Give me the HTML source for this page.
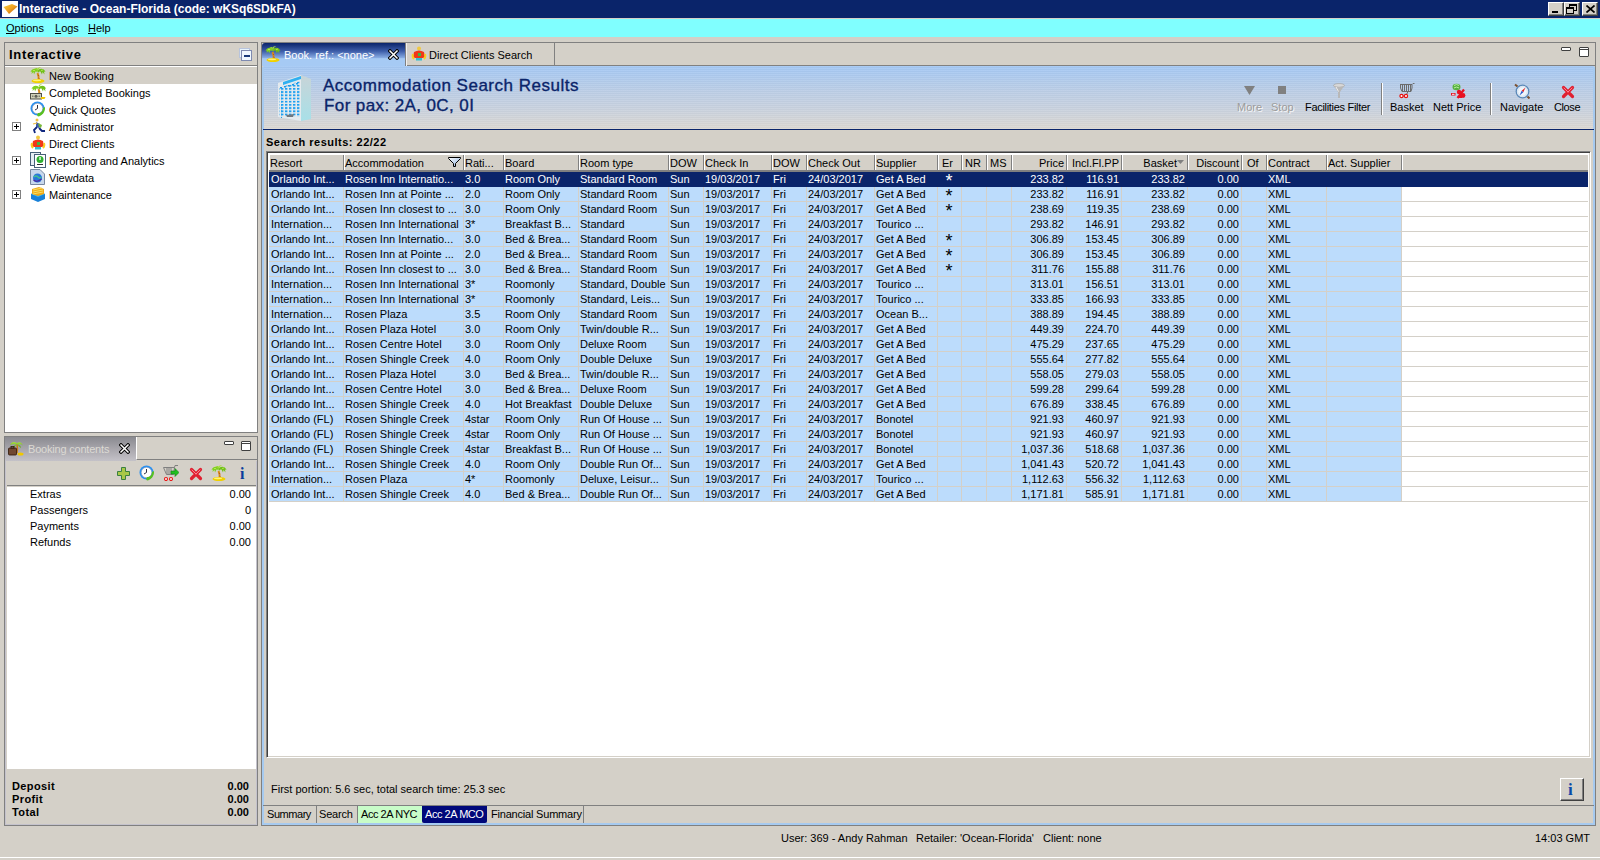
<!DOCTYPE html>
<html><head><meta charset="utf-8">
<style>
*{margin:0;padding:0;box-sizing:border-box}
html,body{width:1600px;height:860px;overflow:hidden;background:#d4d0c8;font-family:"Liberation Sans",sans-serif;font-size:11px;color:#000}
.a{position:absolute}
.t{position:absolute;white-space:nowrap;line-height:13px}
svg.ic{position:absolute;width:16px;height:16px}
#title{left:0;top:0;width:1600px;height:18px;background:#0a246a}
#title .tx{left:19px;top:2px;color:#fff;font-weight:bold;font-size:12px;line-height:14px}
.wb{position:absolute;top:2px;width:16px;height:14px;background:#d4d0c8;border-top:1px solid #fff;border-left:1px solid #fff;border-right:1px solid #404040;border-bottom:1px solid #404040;box-shadow:inset -1px -1px 0 #808080}
#menu{left:0;top:18px;width:1600px;height:19px;background:#80ffff;border-top:1px solid #d4d0c8}
#menu .t{top:3px}
#lp{left:4px;top:42px;width:254px;height:391px;border:1px solid #808080;background:#fff}
#lph{left:0;top:0;width:252px;height:23px;background:#d4d0c8;border-bottom:1px solid #808080}
.ti{position:absolute;left:0;width:252px;height:17px}
.ti .t{left:44px;top:3px}
.ti svg.ic{left:25px;top:0}
.exp{position:absolute;left:7px;top:4px;width:9px;height:9px;border:1px solid #808080;background:#fff}
.exp:before{content:"";position:absolute;left:1px;top:3px;width:5px;height:1px;background:#000}
.exp:after{content:"";position:absolute;left:3px;top:1px;width:1px;height:5px;background:#000}
#bp{left:4px;top:436px;width:254px;height:390px;border:1px solid #808080;background:#d4d0c8}
#rp{left:261px;top:42px;width:1335px;height:784px;border:1px solid #808080;background:#d4d0c8}
#rpin{left:0;top:23px;width:1333px;height:758px;border:1px solid #a6caf0;border-top:none}
#hdrbar{left:1px;top:23px;width:1331px;height:63px;background:repeating-linear-gradient(rgba(255,255,255,0.07) 0 1px,rgba(0,0,0,0.02) 1px 2px),linear-gradient(#a4c8f4,#bccee6 40%,#cad2de 70%,#dcd8d2)}
#tbl{left:266px;top:151px;width:1325px;height:607px;background:#fff;border-top:1px solid #808080;border-left:1px solid #808080;border-right:1px solid #fff;border-bottom:1px solid #fff;box-shadow:inset 1px 1px 0 #404040,inset -1px -1px 0 #d4d0c8}
.hc{position:absolute;top:0;height:17px;background:#d4d0c8;border-right:1px solid #808080;border-bottom:2px solid #808080;box-shadow:inset 1px 0 0 #fff}
.hc span{position:absolute;left:1px;top:2px;line-height:13px;white-space:nowrap}
.hc.r span{left:auto;right:2px}
.hc.bk span{right:10px}
.hc.p4 span{left:4px}
.hc.p3 span{left:3px}
.hc.p5 span{left:5px}
.row{position:absolute;left:0;width:1319px;height:15px;background:linear-gradient(#fff,#fff) 1132px 0/188px 15px no-repeat,#bcdcfc;border-bottom:1px solid #d4d0c8}
.row.sel{background:#0a246a;color:#fff;border-bottom-color:#0a246a}
.bc{position:absolute;top:0;height:14px;padding-left:1px;line-height:14px;white-space:nowrap;border-right:1px solid #d4d0c8}
.sel .bc{border-right-color:#0a246a}
.bc.r{text-align:right;padding-right:2px;padding-left:0}
.bc.f{padding-left:2px}
.bc.c{text-align:center;padding-left:0}
.ast{font-size:18px;position:relative;top:4px;margin-left:-1px;line-height:10px}
.bt{position:absolute;height:17px;top:0;line-height:16px;padding:0 0 0 3px;border-right:1px solid #808080;white-space:nowrap}
.tb{position:absolute;top:58px;line-height:13px;white-space:nowrap}
.sep{position:absolute;top:40px;width:2px;height:32px;border-left:1px solid #808080;border-right:1px solid #fff}
</style></head><body>
<svg width="0" height="0" style="position:absolute">
<defs>
<linearGradient id="gpalm" x1="0" y1="0" x2="0" y2="1"><stop offset="0" stop-color="#a8e040"/><stop offset="1" stop-color="#5aa818"/></linearGradient>
<symbol id="i-palm" viewBox="0 0 16 16">
 <path d="M7.5 6 C8.5 8 9 10.5 8.5 13.5" stroke="#d88818" stroke-width="2" fill="none"/>
 <path d="M8 8 L9 9 M8.5 11 L9.5 11.5" stroke="#a85010" stroke-width="0.8"/>
 <path d="M8 3 C5 1 2 1.5 0.5 5 L2 4.5 L1.5 7 L3.5 5 L4 7.5 L5.5 4.5 C6.5 4.5 7 5 7.5 5.5 Z" fill="#80d020"/>
 <path d="M8 3 C11 1 14 1.5 15.5 5 L14 4.5 L14.5 7.5 L12.5 5 L12 7.5 L10.5 4.5 C9.5 4.5 8.5 5 8 5.5 Z" fill="#70c018"/>
 <path d="M8 3 C7 1 9 0 11 0.5 C9 1 8.5 2 8.5 3.5Z" fill="#a8e040"/>
 <path d="M6 1 C7.5 0.5 8.5 2 8 3.5 C7 2.5 6 2 4.5 2Z" fill="#98d830"/>
 <path d="M3 3.5 L5 3.5 M11 3.5 L13 3" stroke="#c0f060" stroke-width="0.8"/>
 <ellipse cx="8" cy="14" rx="6.5" ry="2" fill="#f0d000"/>
 <ellipse cx="7" cy="13.3" rx="4" ry="0.9" fill="#fff27a"/>
</symbol>
<symbol id="i-money" viewBox="0 0 16 16">
 <path d="M8.5 5 C9.5 7 9.5 9 9 11" stroke="#d88818" stroke-width="2" fill="none"/>
 <path d="M9 3 C6 1 3 1.5 1.5 5 L3 4.5 L2.5 7 L4.5 5 L5 7.5 L6.5 4.5 C7.5 4.5 8 5 8.5 5.5 Z" fill="#80d020"/>
 <path d="M9 3 C12 1 15 1.5 16 5 L15 4.5 L15.5 7.5 L13.5 5 L13 7.5 L11.5 4.5 C10.5 4.5 9.5 5 9 5.5 Z" fill="#70c018"/>
 <path d="M9 3 C8 1 10 0 12 0.5 C10 1 9.5 2 9.5 3.5Z" fill="#a8e040"/>
 <rect x="0.5" y="9.5" width="11" height="5.5" fill="#d0d0b8" stroke="#505048" stroke-width="1"/>
 <circle cx="6" cy="12.2" r="1.5" fill="#606058"/>
 <rect x="2" y="11.5" width="1.5" height="1.5" fill="#808070"/><rect x="8.5" y="11.5" width="1.5" height="1.5" fill="#808070"/>
 <path d="M11 13 H15.5 L14.5 15 H11Z" fill="#f0c800"/>
</symbol>
<symbol id="i-clock" viewBox="0 0 16 16">
 <circle cx="7.5" cy="7.5" r="7" fill="#2a90f0"/>
 <circle cx="7.5" cy="7.5" r="5.2" fill="#fff" stroke="#9090a0" stroke-width="0.5"/>
 <path d="M7.5 4 V7.5 L5 9" stroke="#303040" stroke-width="1" fill="none"/>
 <path d="M15 6 C15.5 11 12 15 8 15.5 L7 14 L8 12 C11 12 13 10 13 7Z" fill="#58c020"/>
</symbol>
<symbol id="i-runner" viewBox="0 0 16 16">
 <circle cx="7" cy="2" r="1.5" fill="#f0c040"/>
 <path d="M6 4 L10 6 L9 10 L6 9Z" fill="#3a5aa8"/>
 <path d="M8 5 L12 7 L11 10 L9 9Z" fill="#78b838"/>
 <path d="M3 6 L7 5" stroke="#f0c040" stroke-width="1.2"/>
 <path d="M7 9 L4 12 L5 15 M9 10 L12 13 L15 13" stroke="#102880" stroke-width="1.8" fill="none"/>
</symbol>
<symbol id="i-client" viewBox="0 0 16 16">
 <circle cx="8" cy="2.5" r="2" fill="#f0c840"/>
 <path d="M3 6 Q8 3 13 6 L14 11 L12 12 L4 12 L2 11Z" fill="#f03818"/>
 <rect x="7" y="7" width="3" height="3" fill="#40b840"/>
 <path d="M2 8 Q1 11 3 13 M14 8 Q15 11 13 13" stroke="#f8d020" stroke-width="2" fill="none"/>
 <rect x="5" y="12" width="6" height="2.5" fill="#30c0d0"/>
</symbol>
<symbol id="i-report" viewBox="0 0 16 16">
 <rect x="0.5" y="0.5" width="10" height="13" fill="#e8eef4" stroke="#486078"/>
 <rect x="4.5" y="2.5" width="11" height="13" fill="#fff" stroke="#486078"/>
 <circle cx="10" cy="7.5" r="3.5" fill="#30b030"/>
 <rect x="9.4" y="5" width="1.3" height="3" fill="#fff"/>
 <rect x="7" y="12" width="6" height="1" fill="#303030"/>
</symbol>
<symbol id="i-view" viewBox="0 0 16 16">
 <path d="M0.5 0.5 H10 L14.5 5 V15.5 H0.5Z" fill="#c8d8ec" stroke="#7888a0"/>
 <circle cx="7.5" cy="9" r="4.5" fill="#2878d8"/>
 <path d="M4 8 Q6 6 8 8 Q10 10 11 8" stroke="#40c090" stroke-width="1.5" fill="none"/>
 <path d="M3.5 11 Q7 14 11.5 10" stroke="#5028a0" stroke-width="1.2" fill="none"/>
</symbol>
<symbol id="i-maint" viewBox="0 0 16 16">
 <path d="M1 8 L8 5 L15 8 L15 13 L8 16 L1 13Z" fill="#1880d8"/>
 <path d="M1 8 L8 11 L15 8 L8 5Z" fill="#38b8f0"/>
 <path d="M2 3 L9 1 L14 3 L14 8 L8 10 L2 8Z" fill="#f0a818"/>
 <path d="M3 4 L12 2 M3 6 L13 4 M3 8 L13 6" stroke="#f8e060" stroke-width="1"/>
</symbol>
<symbol id="i-xw" viewBox="0 0 11 11">
 <path d="M2 2 L9 9 M9 2 L2 9" stroke="#000" stroke-width="3.4" stroke-linecap="square"/>
 <path d="M2 2 L9 9 M9 2 L2 9" stroke="#fff" stroke-width="1.5" stroke-linecap="square"/>
</symbol>
<symbol id="i-redx" viewBox="0 0 14 14">
 <path d="M2.5 2.5 L11.5 11.5 M11.5 2.5 L2.5 11.5" stroke="#e02030" stroke-width="3.2" stroke-linecap="round"/>
 <path d="M3 3 L7 7 M11 3 L7 7" stroke="#ff8090" stroke-width="1" stroke-linecap="round"/>
</symbol>
<symbol id="i-cart" viewBox="0 0 16 16">
 <path d="M1 1.5 H13" stroke="#6c6c6c" stroke-width="1"/>
 <path d="M13 1.5 L14 0.5 H15.5" stroke="#6c6c6c" stroke-width="1" fill="none"/>
 <path d="M1.5 1.5 V5 L3 8.5 H12 L13 5 V1.5" stroke="#6c6c6c" stroke-width="1" fill="none"/>
 <path d="M3.5 2 V8 M5.5 2 V8 M7.5 2 V8 M9.5 2 V8 M11.5 2 V8" stroke="#6c6c6c" stroke-width="1"/>
 <path d="M9 8.5 L7.5 11.5" stroke="#6c6c6c" stroke-width="1"/>
 <circle cx="2.5" cy="13" r="1.6" fill="#fff" stroke="#e81010" stroke-width="1.2"/>
 <circle cx="7" cy="13" r="1.6" fill="#fff" stroke="#e81010" stroke-width="1.2"/>
 <path d="M4 13 H5.5" stroke="#e81010" stroke-width="1"/>
</symbol>
<symbol id="i-nett" viewBox="0 0 16 16">
 <ellipse cx="6.5" cy="4" rx="4" ry="3.2" fill="#58b040"/>
 <path d="M4 2.5 Q6.5 0.5 9 2.5 M4 5 Q6.5 3 9 5" stroke="#b8f0a0" stroke-width="1" fill="none"/>
 <circle cx="9" cy="9" r="2.2" fill="#e81020"/>
 <circle cx="13" cy="12.5" r="2.4" fill="#e81020"/>
 <path d="M14 6.5 L7.5 15" stroke="#e81020" stroke-width="2.2"/>
 <rect x="1" y="10" width="4.5" height="2.5" fill="#e81020"/>
 <rect x="2" y="10.8" width="2.5" height="1" fill="#f8f8f8"/>
 <rect x="9" y="12" width="3" height="3" fill="#e81020"/>
</symbol>
<symbol id="i-compass" viewBox="0 0 16 16">
 <circle cx="8.5" cy="8.5" r="6.3" fill="#f0f6fc" stroke="#5a88b8" stroke-width="1.3"/>
 <circle cx="8.5" cy="8.5" r="4.8" fill="none" stroke="#c8d8e8" stroke-width="0.8"/>
 <path d="M1 1.5 L3.5 3.5" stroke="#7a5030" stroke-width="2"/>
 <path d="M13.5 13.5 L15.5 15.5" stroke="#7a5030" stroke-width="2"/>
 <path d="M11.5 4.5 L9.3 9.3 L7.7 7.7Z" fill="#e02020"/>
 <path d="M5.5 12.5 L7.7 7.7 L9.3 9.3Z" fill="#2858c8"/>
</symbol>
<symbol id="i-funnel" viewBox="0 0 12 16">
 <ellipse cx="6" cy="2.5" rx="5.5" ry="2" fill="#d8d8d8" stroke="#a0a0a0" stroke-width="0.6"/>
 <path d="M0.5 2.5 L5 9 V15 H7 V9 L11.5 2.5 Q6 5 0.5 2.5Z" fill="#b8b8b8"/>
 <path d="M3 4 L5.5 8.5" stroke="#f0f0f0" stroke-width="1"/>
</symbol>
<symbol id="i-plus" viewBox="0 0 13 13">
 <path d="M4.5 0.5 H8.5 V4.5 H12.5 V8.5 H8.5 V12.5 H4.5 V8.5 H0.5 V4.5 H4.5Z" fill="#a8c848" stroke="#3a8040" stroke-width="1"/>
</symbol>
<symbol id="i-cartgo" viewBox="0 0 16 16">
 <path d="M0.5 2.5 H11.5 L10.5 9.5 H3.5Z" fill="none" stroke="#808080" stroke-width="1"/>
 <path d="M4 3 V9 M6 3 V9 M8 3 V9" stroke="#808080" stroke-width="1"/>
 <path d="M11.5 2.5 L12 0.5 H15" stroke="#808080" stroke-width="1" fill="none"/>
 <circle cx="3" cy="14" r="1.5" fill="#fff" stroke="#e81010" stroke-width="1.1"/>
 <circle cx="8" cy="14" r="1.5" fill="#fff" stroke="#e81010" stroke-width="1.1"/>
 <path d="M8 6 H12 V3.5 L16 7.5 L12 11.5 V9 H8Z" fill="#20c020" stroke="#108010" stroke-width="0.6"/>
</symbol>
<symbol id="i-booking" viewBox="0 0 16 16">
 <path d="M9 4 C9.5 7 9.5 10 9 13" stroke="#c87818" stroke-width="1.5" fill="none"/>
 <path d="M9 3 C6 1 3 2 2 5 C4 4 6 4 8 4 C6 5 5 7 5 8 C7 7 8 5 9 4 C10 6 12 7 13 8 C13 6 12 5 10 4 C12 4 14 4 15 6 C14 3 12 1 9 3Z" fill="url(#gpalm)"/>
 <rect x="0.5" y="8" width="8" height="7" rx="1" fill="#704830" stroke="#301808" stroke-width="0.8"/>
 <rect x="3" y="6.5" width="3" height="1.5" fill="none" stroke="#301808" stroke-width="0.8"/>
 <ellipse cx="12.5" cy="14" rx="3" ry="1.5" fill="#f0c800"/>
</symbol>
</defs></svg>

<div id="title" class="a">
  <div class="a" style="left:2px;top:1px;width:16px;height:16px;background:#fff"></div>
  <svg class="a" style="left:3px;top:3px" width="15" height="12" viewBox="0 0 15 12"><defs><linearGradient id="gti" x1="0" y1="0" x2="1" y2="1"><stop offset="0" stop-color="#f8d040"/><stop offset="0.5" stop-color="#f0a020"/><stop offset="1" stop-color="#b05008"/></linearGradient></defs><path d="M0.5 4 L9 1 L14.5 3.5 L6 11 Z" fill="url(#gti)"/></svg>
  <div class="t tx">Interactive - Ocean-Florida (code: wKSq6SDkFA)</div>
  <div class="wb" style="left:1548px"><div class="a" style="left:3px;top:8px;width:6px;height:2px;background:#000"></div></div>
  <div class="wb" style="left:1564px"><div class="a" style="left:4px;top:1px;width:8px;height:7px;border:1px solid #000;border-top-width:2px"></div><div class="a" style="left:1px;top:4px;width:8px;height:7px;border:1px solid #000;border-top-width:2px;background:#d4d0c8"></div></div>
  <div class="wb" style="left:1582px"><svg class="a" style="left:3px;top:2px" width="9" height="8"><path d="M0.5 0.5 L8.5 7.5 M8.5 0.5 L0.5 7.5" stroke="#000" stroke-width="1.7"/></svg></div>
</div>
<div id="menu" class="a">
  <div class="t" style="left:6px"><u>O</u>ptions</div>
  <div class="t" style="left:55px"><u>L</u>ogs</div>
  <div class="t" style="left:88px"><u>H</u>elp</div>
</div>

<div id="lp" class="a">
  <div id="lph" class="a"><div class="t" style="left:4px;top:4px;font-weight:bold;font-size:13px;line-height:15px;letter-spacing:0.7px">Interactive</div>
    <div class="a" style="left:234px;top:5px;width:11px;height:10px;border:1px solid #b8c4dc;background:#e8f4fc"></div>
    <div class="a" style="left:236px;top:7px;width:11px;height:11px;border:1px solid #7f8ab0;background:#f0f8ff"><div class="a" style="left:2px;top:4px;width:6px;height:2px;background:#1a3a7a"></div></div>
  </div>
  <div class="ti" style="top:24px;background:#d4d0c8"><svg class="ic"><use href="#i-palm"/></svg><div class="t">New Booking</div></div>
  <div class="ti" style="top:41px"><svg class="ic"><use href="#i-money"/></svg><div class="t">Completed Bookings</div></div>
  <div class="ti" style="top:58px"><svg class="ic"><use href="#i-clock"/></svg><div class="t">Quick Quotes</div></div>
  <div class="ti" style="top:75px"><div class="exp"></div><svg class="ic"><use href="#i-runner"/></svg><div class="t">Administrator</div></div>
  <div class="ti" style="top:92px"><svg class="ic"><use href="#i-client"/></svg><div class="t">Direct Clients</div></div>
  <div class="ti" style="top:109px"><div class="exp"></div><svg class="ic"><use href="#i-report"/></svg><div class="t">Reporting and Analytics</div></div>
  <div class="ti" style="top:126px"><svg class="ic"><use href="#i-view"/></svg><div class="t">Viewdata</div></div>
  <div class="ti" style="top:143px"><div class="exp"></div><svg class="ic"><use href="#i-maint"/></svg><div class="t">Maintenance</div></div>
</div>

<div id="bp" class="a">
  <div class="a" style="left:0;top:0;width:131px;height:24px;background:linear-gradient(#8a8a90,#a8a6ac 50%,#c4c2c8)"></div>
  <div class="a" style="left:131px;top:0;width:121px;height:23px;background:#d4d0c8;border-left:1px solid #fff;border-bottom:1px solid #808080"></div>
  <svg class="ic" style="left:3px;top:3px"><use href="#i-booking"/></svg>
  <div class="t" style="left:23px;top:6px;color:#dcdad4;letter-spacing:-0.2px">Booking contents</div>
  <svg class="a" style="left:114px;top:6px" width="11" height="11"><use href="#i-xw"/></svg>
  <div class="a" style="left:219px;top:4px;width:10px;height:4px;border:1px solid #404040;border-radius:1px;background:#fff"></div>
  <div class="a" style="left:236px;top:4px;width:10px;height:10px;border:1px solid #404040;border-radius:1px;background:#fff"><div class="a" style="left:0;top:1px;width:8px;height:1px;background:#404040"></div></div>
  <div class="a" style="left:0;top:24px;width:252px;height:364px;border:1px solid #c4c2cc;border-top:none"></div>
  <div class="a" style="left:2px;top:24px;width:249px;height:25px;background:#d4d0c8;border-bottom:1px solid #808080"></div>
  <svg class="a" style="left:112px;top:30px" width="13" height="13"><use href="#i-plus"/></svg>
  <svg class="ic" style="left:134px;top:28px"><use href="#i-clock"/></svg>
  <svg class="ic" style="left:158px;top:28px"><use href="#i-cartgo"/></svg>
  <svg class="a" style="left:184px;top:30px" width="14" height="14"><use href="#i-redx"/></svg>
  <svg class="ic" style="left:206px;top:28px"><use href="#i-palm"/></svg>
  <div class="t" style="left:235px;top:29px;color:#0a3c9c;font-weight:bold;font-family:'Liberation Serif',serif;font-size:16px;line-height:16px">i</div>
  <div class="a" style="left:2px;top:50px;width:249px;height:282px;background:#fff"></div>
  <div class="t" style="left:25px;top:51px">Extras</div><div class="t" style="left:200px;width:46px;text-align:right;top:51px">0.00</div>
  <div class="t" style="left:25px;top:67px">Passengers</div><div class="t" style="left:200px;width:46px;text-align:right;top:67px">0</div>
  <div class="t" style="left:25px;top:83px">Payments</div><div class="t" style="left:200px;width:46px;text-align:right;top:83px">0.00</div>
  <div class="t" style="left:25px;top:99px">Refunds</div><div class="t" style="left:200px;width:46px;text-align:right;top:99px">0.00</div>
  <div class="t" style="left:7px;top:343px;font-weight:bold;letter-spacing:0.4px">Deposit</div><div class="t" style="left:178px;width:66px;text-align:right;top:343px;font-weight:bold">0.00</div>
  <div class="t" style="left:7px;top:356px;font-weight:bold;letter-spacing:0.4px">Profit</div><div class="t" style="left:178px;width:66px;text-align:right;top:356px;font-weight:bold">0.00</div>
  <div class="t" style="left:7px;top:369px;font-weight:bold;letter-spacing:0.4px">Total</div><div class="t" style="left:178px;width:66px;text-align:right;top:369px;font-weight:bold">0.00</div>
</div>

<div id="rp" class="a">
  <div class="a" style="left:0;top:0;width:1333px;height:23px;background:#d4d0c8;border-bottom:1px solid #808080"></div>
  <div class="a" style="left:0;top:0;width:143px;height:23px;border-radius:3px 0 0 0;background:linear-gradient(#0a246a,#3c5ca8 35%,#8aaee4 65%,#a6caf4 68%,#a6caf4)"></div>
  <svg class="ic" style="left:3px;top:3px"><use href="#i-palm"/></svg>
  <div class="t" style="left:22px;top:6px;color:#fff">Book. ref.: &lt;none&gt;</div>
  <svg class="a" style="left:126px;top:6px" width="11" height="11"><use href="#i-xw"/></svg>
  <div class="a" style="left:143px;top:0px;width:150px;height:23px;border-right:1px solid #808080;border-left:1px solid #808080;box-shadow:inset 1px 0 0 #f0f0f0"></div>
  <svg class="ic" style="left:149px;top:3px"><use href="#i-client"/></svg>
  <div class="t" style="left:167px;top:6px">Direct Clients Search</div>
  <div class="a" style="left:1299px;top:4px;width:10px;height:4px;border:1px solid #404040;border-radius:1px;background:#fff"></div>
  <div class="a" style="left:1317px;top:4px;width:10px;height:10px;border:1px solid #404040;border-radius:1px;background:#fff"><div class="a" style="left:0;top:1px;width:8px;height:1px;background:#404040"></div></div>
  <div id="hdrbar" class="a"></div>
  <div class="a" style="left:0;top:24px;width:2px;height:758px;background:#a6caf0"></div>
  <div class="a" style="left:1331px;top:24px;width:2px;height:758px;background:#a6caf0"></div>
  <div class="a" style="left:0;top:780px;width:1333px;height:2px;background:#a6caf0"></div>
  <div class="a" style="left:1px;top:86px;width:1331px;height:1px;background:#0a246a"></div>
  <svg class="a" style="left:15px;top:29px" width="36" height="50" viewBox="0 0 36 50">
    <defs><linearGradient id="gside" x1="0" y1="0" x2="0" y2="1"><stop offset="0" stop-color="#c8d4d8"/><stop offset="1" stop-color="#a8e0e8"/></linearGradient></defs>
    <path d="M1 11 L24 3 L24 49 L1 45Z" fill="#e4eaee"/>
    <path d="M24 3 L34 7 L34 47 L24 49Z" fill="url(#gside)"/>
    <path d="M6 10 L24 4 L24 7 L6 13Z" fill="#30b0f0"/>
    <g fill="#1898e8">
      <rect x="3" y="15" width="2" height="1.5"/><rect x="7" y="14" width="2" height="1.5"/><rect x="11" y="13" width="2" height="1.5"/><rect x="15" y="12" width="2" height="1.5"/><rect x="19" y="11" width="2" height="1.5"/>
    </g>
    <g fill="#1898e8" id="wrows">
      <rect x="3" y="18" width="2" height="28" fill="url(#pw)"/>
    </g>
    <defs><pattern id="pw" width="4" height="3.2" patternUnits="userSpaceOnUse"><rect width="2.4" height="1.8" fill="#20a0f0"/></pattern></defs>
    <path d="M2 16 L23 9 L23 45 L2 44Z" fill="url(#pw)"/>
    <path d="M9 43 L17 42 L16 45 L10 45Z" fill="#707880"/>
  </svg>
  <div class="t" style="left:61px;top:33px;font-size:17px;line-height:19px;color:#0a246a;letter-spacing:0.5px;-webkit-text-stroke:0.35px #0a246a">Accommodation Search Results</div>
  <div class="t" style="left:62px;top:53px;font-size:17px;line-height:19px;color:#0a246a;letter-spacing:0.4px;-webkit-text-stroke:0.35px #0a246a">For pax: 2A, 0C, 0I</div>
  <!-- toolbar -->
  <svg class="a" style="left:982px;top:43px" width="11" height="10"><path d="M0 0 H11 L5.5 9Z" fill="#808080"/></svg>
  <div class="tb" style="left:975px;color:#9c9c9c;text-shadow:1px 1px 0 #f8f8f8">More</div>
  <div class="a" style="left:1016px;top:43px;width:8px;height:8px;background:#808080"></div>
  <div class="tb" style="left:1009px;color:#9c9c9c;text-shadow:1px 1px 0 #f8f8f8">Stop</div>
  <svg class="a" style="left:1071px;top:40px" width="12" height="16"><use href="#i-funnel"/></svg>
  <div class="tb" style="left:1043px;letter-spacing:-0.3px">Facilities Filter</div>
  <div class="sep" style="left:1119px"></div>
  <svg class="ic" style="left:1137px;top:40px"><use href="#i-cart"/></svg>
  <div class="tb" style="left:1128px">Basket</div>
  <svg class="ic" style="left:1188px;top:40px"><use href="#i-nett"/></svg>
  <div class="tb" style="left:1171px">Nett Price</div>
  <div class="sep" style="left:1228px"></div>
  <svg class="ic" style="left:1252px;top:40px"><use href="#i-compass"/></svg>
  <div class="tb" style="left:1238px">Navigate</div>
  <svg class="a" style="left:1299px;top:42px" width="14" height="14"><use href="#i-redx"/></svg>
  <div class="tb" style="left:1292px;letter-spacing:-0.4px">Close</div>

  <div class="t" style="left:4px;top:93px;font-weight:bold;letter-spacing:0.5px">Search results: 22/22</div>
  <div class="t" style="left:9px;top:740px">First portion: 5.6 sec, total search time: 25.3 sec</div>
  <div class="a" style="left:1298px;top:735px;width:24px;height:23px;background:#d4d0c8;border-top:1px solid #fff;border-left:1px solid #fff;border-right:1px solid #404040;border-bottom:1px solid #404040;box-shadow:inset -1px -1px 0 #808080"><div class="t" style="left:7px;top:3px;color:#0a4aa8;font-weight:bold;font-family:'Liberation Serif',serif;font-size:17px;line-height:15px">i</div></div>
  <div class="a" style="left:1px;top:762px;width:1331px;height:1px;background:#808080"></div>
  <div class="a" style="left:1px;top:763px;width:1331px;height:17px">
    <div class="bt" style="left:1px;width:53px;padding-left:3px;letter-spacing:-0.45px">Summary</div>
    <div class="bt" style="left:54px;width:41px;padding-left:2px;letter-spacing:-0.2px">Search</div>
    <div class="bt" style="left:95px;width:64px;padding-left:3px;letter-spacing:-0.45px;background:#c8fcc8;border-right:none">Acc 2A NYC</div>
    <div class="bt" style="left:159px;width:65px;padding-left:3px;letter-spacing:-0.45px;background:#00087a;color:#fff;border-radius:0 0 2px 2px;border-right-color:#00087a">Acc 2A MCO</div>
    <div class="bt" style="left:224px;width:97px;padding-left:4px;letter-spacing:-0.2px">Financial Summary</div>
  </div>
</div>
<div id="tbl" class="a">
  <div class="a" style="left:2px;top:3px;width:1320px;height:17px"><div class="hc" style="left:0px;width:75px"><span>Resort</span></div><div class="hc" style="left:75px;width:120px"><span>Accommodation</span></div><div class="hc" style="left:195px;width:40px"><span>Rati...</span></div><div class="hc" style="left:235px;width:75px"><span>Board</span></div><div class="hc" style="left:310px;width:90px"><span>Room type</span></div><div class="hc" style="left:400px;width:35px"><span>DOW</span></div><div class="hc" style="left:435px;width:68px"><span>Check In</span></div><div class="hc" style="left:503px;width:35px"><span>DOW</span></div><div class="hc" style="left:538px;width:68px"><span>Check Out</span></div><div class="hc" style="left:606px;width:63px"><span>Supplier</span></div><div class="hc p4" style="left:669px;width:24px"><span>Er</span></div><div class="hc p3" style="left:693px;width:25px"><span>NR</span></div><div class="hc p3" style="left:718px;width:25px"><span>MS</span></div><div class="hc r" style="left:743px;width:55px"><span>Price</span></div><div class="hc r" style="left:798px;width:55px"><span>Incl.Fl.PP</span></div><div class="hc r bk" style="left:853px;width:66px"><span>Basket</span></div><div class="hc r" style="left:919px;width:54px"><span>Discount</span></div><div class="hc p5" style="left:973px;width:25px"><span>Of</span></div><div class="hc" style="left:998px;width:60px"><span>Contract</span></div><div class="hc" style="left:1058px;width:75px"><span>Act. Supplier</span></div><div class="hc" style="left:1133px;width:186px;border-right:none"></div></div>
  <svg class="a" style="left:181px;top:5px" width="13" height="10" viewBox="0 0 13 10"><defs><linearGradient id="gf" x1="0" y1="0" x2="1" y2="1"><stop offset="0" stop-color="#fff"/><stop offset="1" stop-color="#8ab0e0"/></linearGradient></defs><path d="M0.5 0.5 H12.5 V1.5 L7.5 6.5 V9.5 H5.5 V6.5 L0.5 1.5Z" fill="url(#gf)" stroke="#000" stroke-width="1"/></svg>
  <svg class="a" style="left:910px;top:8px" width="7" height="4"><path d="M0 0 H7 L3.5 4Z" fill="#808080"/></svg>
  <div class="a" style="left:2px;top:20px;width:1320px;height:500px"><div class="row sel" style="top:0px"><div class="bc f" style="left:0px;width:75px">Orlando Int...</div><div class="bc" style="left:75px;width:120px">Rosen Inn Internatio...</div><div class="bc" style="left:195px;width:40px">3.0</div><div class="bc" style="left:235px;width:75px">Room Only</div><div class="bc" style="left:310px;width:90px">Standard Room</div><div class="bc" style="left:400px;width:35px">Sun</div><div class="bc" style="left:435px;width:68px">19/03/2017</div><div class="bc" style="left:503px;width:35px">Fri</div><div class="bc" style="left:538px;width:68px">24/03/2017</div><div class="bc" style="left:606px;width:63px">Get A Bed</div><div class="bc c" style="left:669px;width:24px"><span class="ast">*</span></div><div class="bc" style="left:693px;width:25px"></div><div class="bc" style="left:718px;width:25px"></div><div class="bc r" style="left:743px;width:55px">233.82</div><div class="bc r" style="left:798px;width:55px">116.91</div><div class="bc r" style="left:853px;width:66px">233.82</div><div class="bc r" style="left:919px;width:54px">0.00</div><div class="bc" style="left:973px;width:25px"></div><div class="bc" style="left:998px;width:60px">XML</div><div class="bc" style="left:1058px;width:75px"></div></div>
<div class="row" style="top:15px"><div class="bc f" style="left:0px;width:75px">Orlando Int...</div><div class="bc" style="left:75px;width:120px">Rosen Inn at Pointe ...</div><div class="bc" style="left:195px;width:40px">2.0</div><div class="bc" style="left:235px;width:75px">Room Only</div><div class="bc" style="left:310px;width:90px">Standard Room</div><div class="bc" style="left:400px;width:35px">Sun</div><div class="bc" style="left:435px;width:68px">19/03/2017</div><div class="bc" style="left:503px;width:35px">Fri</div><div class="bc" style="left:538px;width:68px">24/03/2017</div><div class="bc" style="left:606px;width:63px">Get A Bed</div><div class="bc c" style="left:669px;width:24px"><span class="ast">*</span></div><div class="bc" style="left:693px;width:25px"></div><div class="bc" style="left:718px;width:25px"></div><div class="bc r" style="left:743px;width:55px">233.82</div><div class="bc r" style="left:798px;width:55px">116.91</div><div class="bc r" style="left:853px;width:66px">233.82</div><div class="bc r" style="left:919px;width:54px">0.00</div><div class="bc" style="left:973px;width:25px"></div><div class="bc" style="left:998px;width:60px">XML</div><div class="bc" style="left:1058px;width:75px"></div></div>
<div class="row" style="top:30px"><div class="bc f" style="left:0px;width:75px">Orlando Int...</div><div class="bc" style="left:75px;width:120px">Rosen Inn closest to ...</div><div class="bc" style="left:195px;width:40px">3.0</div><div class="bc" style="left:235px;width:75px">Room Only</div><div class="bc" style="left:310px;width:90px">Standard Room</div><div class="bc" style="left:400px;width:35px">Sun</div><div class="bc" style="left:435px;width:68px">19/03/2017</div><div class="bc" style="left:503px;width:35px">Fri</div><div class="bc" style="left:538px;width:68px">24/03/2017</div><div class="bc" style="left:606px;width:63px">Get A Bed</div><div class="bc c" style="left:669px;width:24px"><span class="ast">*</span></div><div class="bc" style="left:693px;width:25px"></div><div class="bc" style="left:718px;width:25px"></div><div class="bc r" style="left:743px;width:55px">238.69</div><div class="bc r" style="left:798px;width:55px">119.35</div><div class="bc r" style="left:853px;width:66px">238.69</div><div class="bc r" style="left:919px;width:54px">0.00</div><div class="bc" style="left:973px;width:25px"></div><div class="bc" style="left:998px;width:60px">XML</div><div class="bc" style="left:1058px;width:75px"></div></div>
<div class="row" style="top:45px"><div class="bc f" style="left:0px;width:75px">Internation...</div><div class="bc" style="left:75px;width:120px">Rosen Inn International</div><div class="bc" style="left:195px;width:40px">3*</div><div class="bc" style="left:235px;width:75px">Breakfast B...</div><div class="bc" style="left:310px;width:90px">Standard</div><div class="bc" style="left:400px;width:35px">Sun</div><div class="bc" style="left:435px;width:68px">19/03/2017</div><div class="bc" style="left:503px;width:35px">Fri</div><div class="bc" style="left:538px;width:68px">24/03/2017</div><div class="bc" style="left:606px;width:63px">Tourico ...</div><div class="bc c" style="left:669px;width:24px"></div><div class="bc" style="left:693px;width:25px"></div><div class="bc" style="left:718px;width:25px"></div><div class="bc r" style="left:743px;width:55px">293.82</div><div class="bc r" style="left:798px;width:55px">146.91</div><div class="bc r" style="left:853px;width:66px">293.82</div><div class="bc r" style="left:919px;width:54px">0.00</div><div class="bc" style="left:973px;width:25px"></div><div class="bc" style="left:998px;width:60px">XML</div><div class="bc" style="left:1058px;width:75px"></div></div>
<div class="row" style="top:60px"><div class="bc f" style="left:0px;width:75px">Orlando Int...</div><div class="bc" style="left:75px;width:120px">Rosen Inn Internatio...</div><div class="bc" style="left:195px;width:40px">3.0</div><div class="bc" style="left:235px;width:75px">Bed &amp; Brea...</div><div class="bc" style="left:310px;width:90px">Standard Room</div><div class="bc" style="left:400px;width:35px">Sun</div><div class="bc" style="left:435px;width:68px">19/03/2017</div><div class="bc" style="left:503px;width:35px">Fri</div><div class="bc" style="left:538px;width:68px">24/03/2017</div><div class="bc" style="left:606px;width:63px">Get A Bed</div><div class="bc c" style="left:669px;width:24px"><span class="ast">*</span></div><div class="bc" style="left:693px;width:25px"></div><div class="bc" style="left:718px;width:25px"></div><div class="bc r" style="left:743px;width:55px">306.89</div><div class="bc r" style="left:798px;width:55px">153.45</div><div class="bc r" style="left:853px;width:66px">306.89</div><div class="bc r" style="left:919px;width:54px">0.00</div><div class="bc" style="left:973px;width:25px"></div><div class="bc" style="left:998px;width:60px">XML</div><div class="bc" style="left:1058px;width:75px"></div></div>
<div class="row" style="top:75px"><div class="bc f" style="left:0px;width:75px">Orlando Int...</div><div class="bc" style="left:75px;width:120px">Rosen Inn at Pointe ...</div><div class="bc" style="left:195px;width:40px">2.0</div><div class="bc" style="left:235px;width:75px">Bed &amp; Brea...</div><div class="bc" style="left:310px;width:90px">Standard Room</div><div class="bc" style="left:400px;width:35px">Sun</div><div class="bc" style="left:435px;width:68px">19/03/2017</div><div class="bc" style="left:503px;width:35px">Fri</div><div class="bc" style="left:538px;width:68px">24/03/2017</div><div class="bc" style="left:606px;width:63px">Get A Bed</div><div class="bc c" style="left:669px;width:24px"><span class="ast">*</span></div><div class="bc" style="left:693px;width:25px"></div><div class="bc" style="left:718px;width:25px"></div><div class="bc r" style="left:743px;width:55px">306.89</div><div class="bc r" style="left:798px;width:55px">153.45</div><div class="bc r" style="left:853px;width:66px">306.89</div><div class="bc r" style="left:919px;width:54px">0.00</div><div class="bc" style="left:973px;width:25px"></div><div class="bc" style="left:998px;width:60px">XML</div><div class="bc" style="left:1058px;width:75px"></div></div>
<div class="row" style="top:90px"><div class="bc f" style="left:0px;width:75px">Orlando Int...</div><div class="bc" style="left:75px;width:120px">Rosen Inn closest to ...</div><div class="bc" style="left:195px;width:40px">3.0</div><div class="bc" style="left:235px;width:75px">Bed &amp; Brea...</div><div class="bc" style="left:310px;width:90px">Standard Room</div><div class="bc" style="left:400px;width:35px">Sun</div><div class="bc" style="left:435px;width:68px">19/03/2017</div><div class="bc" style="left:503px;width:35px">Fri</div><div class="bc" style="left:538px;width:68px">24/03/2017</div><div class="bc" style="left:606px;width:63px">Get A Bed</div><div class="bc c" style="left:669px;width:24px"><span class="ast">*</span></div><div class="bc" style="left:693px;width:25px"></div><div class="bc" style="left:718px;width:25px"></div><div class="bc r" style="left:743px;width:55px">311.76</div><div class="bc r" style="left:798px;width:55px">155.88</div><div class="bc r" style="left:853px;width:66px">311.76</div><div class="bc r" style="left:919px;width:54px">0.00</div><div class="bc" style="left:973px;width:25px"></div><div class="bc" style="left:998px;width:60px">XML</div><div class="bc" style="left:1058px;width:75px"></div></div>
<div class="row" style="top:105px"><div class="bc f" style="left:0px;width:75px">Internation...</div><div class="bc" style="left:75px;width:120px">Rosen Inn International</div><div class="bc" style="left:195px;width:40px">3*</div><div class="bc" style="left:235px;width:75px">Roomonly</div><div class="bc" style="left:310px;width:90px">Standard, Double</div><div class="bc" style="left:400px;width:35px">Sun</div><div class="bc" style="left:435px;width:68px">19/03/2017</div><div class="bc" style="left:503px;width:35px">Fri</div><div class="bc" style="left:538px;width:68px">24/03/2017</div><div class="bc" style="left:606px;width:63px">Tourico ...</div><div class="bc c" style="left:669px;width:24px"></div><div class="bc" style="left:693px;width:25px"></div><div class="bc" style="left:718px;width:25px"></div><div class="bc r" style="left:743px;width:55px">313.01</div><div class="bc r" style="left:798px;width:55px">156.51</div><div class="bc r" style="left:853px;width:66px">313.01</div><div class="bc r" style="left:919px;width:54px">0.00</div><div class="bc" style="left:973px;width:25px"></div><div class="bc" style="left:998px;width:60px">XML</div><div class="bc" style="left:1058px;width:75px"></div></div>
<div class="row" style="top:120px"><div class="bc f" style="left:0px;width:75px">Internation...</div><div class="bc" style="left:75px;width:120px">Rosen Inn International</div><div class="bc" style="left:195px;width:40px">3*</div><div class="bc" style="left:235px;width:75px">Roomonly</div><div class="bc" style="left:310px;width:90px">Standard, Leis...</div><div class="bc" style="left:400px;width:35px">Sun</div><div class="bc" style="left:435px;width:68px">19/03/2017</div><div class="bc" style="left:503px;width:35px">Fri</div><div class="bc" style="left:538px;width:68px">24/03/2017</div><div class="bc" style="left:606px;width:63px">Tourico ...</div><div class="bc c" style="left:669px;width:24px"></div><div class="bc" style="left:693px;width:25px"></div><div class="bc" style="left:718px;width:25px"></div><div class="bc r" style="left:743px;width:55px">333.85</div><div class="bc r" style="left:798px;width:55px">166.93</div><div class="bc r" style="left:853px;width:66px">333.85</div><div class="bc r" style="left:919px;width:54px">0.00</div><div class="bc" style="left:973px;width:25px"></div><div class="bc" style="left:998px;width:60px">XML</div><div class="bc" style="left:1058px;width:75px"></div></div>
<div class="row" style="top:135px"><div class="bc f" style="left:0px;width:75px">Internation...</div><div class="bc" style="left:75px;width:120px">Rosen Plaza</div><div class="bc" style="left:195px;width:40px">3.5</div><div class="bc" style="left:235px;width:75px">Room Only</div><div class="bc" style="left:310px;width:90px">Standard Room</div><div class="bc" style="left:400px;width:35px">Sun</div><div class="bc" style="left:435px;width:68px">19/03/2017</div><div class="bc" style="left:503px;width:35px">Fri</div><div class="bc" style="left:538px;width:68px">24/03/2017</div><div class="bc" style="left:606px;width:63px">Ocean B...</div><div class="bc c" style="left:669px;width:24px"></div><div class="bc" style="left:693px;width:25px"></div><div class="bc" style="left:718px;width:25px"></div><div class="bc r" style="left:743px;width:55px">388.89</div><div class="bc r" style="left:798px;width:55px">194.45</div><div class="bc r" style="left:853px;width:66px">388.89</div><div class="bc r" style="left:919px;width:54px">0.00</div><div class="bc" style="left:973px;width:25px"></div><div class="bc" style="left:998px;width:60px">XML</div><div class="bc" style="left:1058px;width:75px"></div></div>
<div class="row" style="top:150px"><div class="bc f" style="left:0px;width:75px">Orlando Int...</div><div class="bc" style="left:75px;width:120px">Rosen Plaza Hotel</div><div class="bc" style="left:195px;width:40px">3.0</div><div class="bc" style="left:235px;width:75px">Room Only</div><div class="bc" style="left:310px;width:90px">Twin/double R...</div><div class="bc" style="left:400px;width:35px">Sun</div><div class="bc" style="left:435px;width:68px">19/03/2017</div><div class="bc" style="left:503px;width:35px">Fri</div><div class="bc" style="left:538px;width:68px">24/03/2017</div><div class="bc" style="left:606px;width:63px">Get A Bed</div><div class="bc c" style="left:669px;width:24px"></div><div class="bc" style="left:693px;width:25px"></div><div class="bc" style="left:718px;width:25px"></div><div class="bc r" style="left:743px;width:55px">449.39</div><div class="bc r" style="left:798px;width:55px">224.70</div><div class="bc r" style="left:853px;width:66px">449.39</div><div class="bc r" style="left:919px;width:54px">0.00</div><div class="bc" style="left:973px;width:25px"></div><div class="bc" style="left:998px;width:60px">XML</div><div class="bc" style="left:1058px;width:75px"></div></div>
<div class="row" style="top:165px"><div class="bc f" style="left:0px;width:75px">Orlando Int...</div><div class="bc" style="left:75px;width:120px">Rosen Centre Hotel</div><div class="bc" style="left:195px;width:40px">3.0</div><div class="bc" style="left:235px;width:75px">Room Only</div><div class="bc" style="left:310px;width:90px">Deluxe Room</div><div class="bc" style="left:400px;width:35px">Sun</div><div class="bc" style="left:435px;width:68px">19/03/2017</div><div class="bc" style="left:503px;width:35px">Fri</div><div class="bc" style="left:538px;width:68px">24/03/2017</div><div class="bc" style="left:606px;width:63px">Get A Bed</div><div class="bc c" style="left:669px;width:24px"></div><div class="bc" style="left:693px;width:25px"></div><div class="bc" style="left:718px;width:25px"></div><div class="bc r" style="left:743px;width:55px">475.29</div><div class="bc r" style="left:798px;width:55px">237.65</div><div class="bc r" style="left:853px;width:66px">475.29</div><div class="bc r" style="left:919px;width:54px">0.00</div><div class="bc" style="left:973px;width:25px"></div><div class="bc" style="left:998px;width:60px">XML</div><div class="bc" style="left:1058px;width:75px"></div></div>
<div class="row" style="top:180px"><div class="bc f" style="left:0px;width:75px">Orlando Int...</div><div class="bc" style="left:75px;width:120px">Rosen Shingle Creek</div><div class="bc" style="left:195px;width:40px">4.0</div><div class="bc" style="left:235px;width:75px">Room Only</div><div class="bc" style="left:310px;width:90px">Double Deluxe</div><div class="bc" style="left:400px;width:35px">Sun</div><div class="bc" style="left:435px;width:68px">19/03/2017</div><div class="bc" style="left:503px;width:35px">Fri</div><div class="bc" style="left:538px;width:68px">24/03/2017</div><div class="bc" style="left:606px;width:63px">Get A Bed</div><div class="bc c" style="left:669px;width:24px"></div><div class="bc" style="left:693px;width:25px"></div><div class="bc" style="left:718px;width:25px"></div><div class="bc r" style="left:743px;width:55px">555.64</div><div class="bc r" style="left:798px;width:55px">277.82</div><div class="bc r" style="left:853px;width:66px">555.64</div><div class="bc r" style="left:919px;width:54px">0.00</div><div class="bc" style="left:973px;width:25px"></div><div class="bc" style="left:998px;width:60px">XML</div><div class="bc" style="left:1058px;width:75px"></div></div>
<div class="row" style="top:195px"><div class="bc f" style="left:0px;width:75px">Orlando Int...</div><div class="bc" style="left:75px;width:120px">Rosen Plaza Hotel</div><div class="bc" style="left:195px;width:40px">3.0</div><div class="bc" style="left:235px;width:75px">Bed &amp; Brea...</div><div class="bc" style="left:310px;width:90px">Twin/double R...</div><div class="bc" style="left:400px;width:35px">Sun</div><div class="bc" style="left:435px;width:68px">19/03/2017</div><div class="bc" style="left:503px;width:35px">Fri</div><div class="bc" style="left:538px;width:68px">24/03/2017</div><div class="bc" style="left:606px;width:63px">Get A Bed</div><div class="bc c" style="left:669px;width:24px"></div><div class="bc" style="left:693px;width:25px"></div><div class="bc" style="left:718px;width:25px"></div><div class="bc r" style="left:743px;width:55px">558.05</div><div class="bc r" style="left:798px;width:55px">279.03</div><div class="bc r" style="left:853px;width:66px">558.05</div><div class="bc r" style="left:919px;width:54px">0.00</div><div class="bc" style="left:973px;width:25px"></div><div class="bc" style="left:998px;width:60px">XML</div><div class="bc" style="left:1058px;width:75px"></div></div>
<div class="row" style="top:210px"><div class="bc f" style="left:0px;width:75px">Orlando Int...</div><div class="bc" style="left:75px;width:120px">Rosen Centre Hotel</div><div class="bc" style="left:195px;width:40px">3.0</div><div class="bc" style="left:235px;width:75px">Bed &amp; Brea...</div><div class="bc" style="left:310px;width:90px">Deluxe Room</div><div class="bc" style="left:400px;width:35px">Sun</div><div class="bc" style="left:435px;width:68px">19/03/2017</div><div class="bc" style="left:503px;width:35px">Fri</div><div class="bc" style="left:538px;width:68px">24/03/2017</div><div class="bc" style="left:606px;width:63px">Get A Bed</div><div class="bc c" style="left:669px;width:24px"></div><div class="bc" style="left:693px;width:25px"></div><div class="bc" style="left:718px;width:25px"></div><div class="bc r" style="left:743px;width:55px">599.28</div><div class="bc r" style="left:798px;width:55px">299.64</div><div class="bc r" style="left:853px;width:66px">599.28</div><div class="bc r" style="left:919px;width:54px">0.00</div><div class="bc" style="left:973px;width:25px"></div><div class="bc" style="left:998px;width:60px">XML</div><div class="bc" style="left:1058px;width:75px"></div></div>
<div class="row" style="top:225px"><div class="bc f" style="left:0px;width:75px">Orlando Int...</div><div class="bc" style="left:75px;width:120px">Rosen Shingle Creek</div><div class="bc" style="left:195px;width:40px">4.0</div><div class="bc" style="left:235px;width:75px">Hot Breakfast</div><div class="bc" style="left:310px;width:90px">Double Deluxe</div><div class="bc" style="left:400px;width:35px">Sun</div><div class="bc" style="left:435px;width:68px">19/03/2017</div><div class="bc" style="left:503px;width:35px">Fri</div><div class="bc" style="left:538px;width:68px">24/03/2017</div><div class="bc" style="left:606px;width:63px">Get A Bed</div><div class="bc c" style="left:669px;width:24px"></div><div class="bc" style="left:693px;width:25px"></div><div class="bc" style="left:718px;width:25px"></div><div class="bc r" style="left:743px;width:55px">676.89</div><div class="bc r" style="left:798px;width:55px">338.45</div><div class="bc r" style="left:853px;width:66px">676.89</div><div class="bc r" style="left:919px;width:54px">0.00</div><div class="bc" style="left:973px;width:25px"></div><div class="bc" style="left:998px;width:60px">XML</div><div class="bc" style="left:1058px;width:75px"></div></div>
<div class="row" style="top:240px"><div class="bc f" style="left:0px;width:75px">Orlando (FL)</div><div class="bc" style="left:75px;width:120px">Rosen Shingle Creek</div><div class="bc" style="left:195px;width:40px">4star</div><div class="bc" style="left:235px;width:75px">Room Only</div><div class="bc" style="left:310px;width:90px">Run Of House ...</div><div class="bc" style="left:400px;width:35px">Sun</div><div class="bc" style="left:435px;width:68px">19/03/2017</div><div class="bc" style="left:503px;width:35px">Fri</div><div class="bc" style="left:538px;width:68px">24/03/2017</div><div class="bc" style="left:606px;width:63px">Bonotel</div><div class="bc c" style="left:669px;width:24px"></div><div class="bc" style="left:693px;width:25px"></div><div class="bc" style="left:718px;width:25px"></div><div class="bc r" style="left:743px;width:55px">921.93</div><div class="bc r" style="left:798px;width:55px">460.97</div><div class="bc r" style="left:853px;width:66px">921.93</div><div class="bc r" style="left:919px;width:54px">0.00</div><div class="bc" style="left:973px;width:25px"></div><div class="bc" style="left:998px;width:60px">XML</div><div class="bc" style="left:1058px;width:75px"></div></div>
<div class="row" style="top:255px"><div class="bc f" style="left:0px;width:75px">Orlando (FL)</div><div class="bc" style="left:75px;width:120px">Rosen Shingle Creek</div><div class="bc" style="left:195px;width:40px">4star</div><div class="bc" style="left:235px;width:75px">Room Only</div><div class="bc" style="left:310px;width:90px">Run Of House ...</div><div class="bc" style="left:400px;width:35px">Sun</div><div class="bc" style="left:435px;width:68px">19/03/2017</div><div class="bc" style="left:503px;width:35px">Fri</div><div class="bc" style="left:538px;width:68px">24/03/2017</div><div class="bc" style="left:606px;width:63px">Bonotel</div><div class="bc c" style="left:669px;width:24px"></div><div class="bc" style="left:693px;width:25px"></div><div class="bc" style="left:718px;width:25px"></div><div class="bc r" style="left:743px;width:55px">921.93</div><div class="bc r" style="left:798px;width:55px">460.97</div><div class="bc r" style="left:853px;width:66px">921.93</div><div class="bc r" style="left:919px;width:54px">0.00</div><div class="bc" style="left:973px;width:25px"></div><div class="bc" style="left:998px;width:60px">XML</div><div class="bc" style="left:1058px;width:75px"></div></div>
<div class="row" style="top:270px"><div class="bc f" style="left:0px;width:75px">Orlando (FL)</div><div class="bc" style="left:75px;width:120px">Rosen Shingle Creek</div><div class="bc" style="left:195px;width:40px">4star</div><div class="bc" style="left:235px;width:75px">Breakfast B...</div><div class="bc" style="left:310px;width:90px">Run Of House ...</div><div class="bc" style="left:400px;width:35px">Sun</div><div class="bc" style="left:435px;width:68px">19/03/2017</div><div class="bc" style="left:503px;width:35px">Fri</div><div class="bc" style="left:538px;width:68px">24/03/2017</div><div class="bc" style="left:606px;width:63px">Bonotel</div><div class="bc c" style="left:669px;width:24px"></div><div class="bc" style="left:693px;width:25px"></div><div class="bc" style="left:718px;width:25px"></div><div class="bc r" style="left:743px;width:55px">1,037.36</div><div class="bc r" style="left:798px;width:55px">518.68</div><div class="bc r" style="left:853px;width:66px">1,037.36</div><div class="bc r" style="left:919px;width:54px">0.00</div><div class="bc" style="left:973px;width:25px"></div><div class="bc" style="left:998px;width:60px">XML</div><div class="bc" style="left:1058px;width:75px"></div></div>
<div class="row" style="top:285px"><div class="bc f" style="left:0px;width:75px">Orlando Int...</div><div class="bc" style="left:75px;width:120px">Rosen Shingle Creek</div><div class="bc" style="left:195px;width:40px">4.0</div><div class="bc" style="left:235px;width:75px">Room Only</div><div class="bc" style="left:310px;width:90px">Double Run Of...</div><div class="bc" style="left:400px;width:35px">Sun</div><div class="bc" style="left:435px;width:68px">19/03/2017</div><div class="bc" style="left:503px;width:35px">Fri</div><div class="bc" style="left:538px;width:68px">24/03/2017</div><div class="bc" style="left:606px;width:63px">Get A Bed</div><div class="bc c" style="left:669px;width:24px"></div><div class="bc" style="left:693px;width:25px"></div><div class="bc" style="left:718px;width:25px"></div><div class="bc r" style="left:743px;width:55px">1,041.43</div><div class="bc r" style="left:798px;width:55px">520.72</div><div class="bc r" style="left:853px;width:66px">1,041.43</div><div class="bc r" style="left:919px;width:54px">0.00</div><div class="bc" style="left:973px;width:25px"></div><div class="bc" style="left:998px;width:60px">XML</div><div class="bc" style="left:1058px;width:75px"></div></div>
<div class="row" style="top:300px"><div class="bc f" style="left:0px;width:75px">Internation...</div><div class="bc" style="left:75px;width:120px">Rosen Plaza</div><div class="bc" style="left:195px;width:40px">4*</div><div class="bc" style="left:235px;width:75px">Roomonly</div><div class="bc" style="left:310px;width:90px">Deluxe, Leisur...</div><div class="bc" style="left:400px;width:35px">Sun</div><div class="bc" style="left:435px;width:68px">19/03/2017</div><div class="bc" style="left:503px;width:35px">Fri</div><div class="bc" style="left:538px;width:68px">24/03/2017</div><div class="bc" style="left:606px;width:63px">Tourico ...</div><div class="bc c" style="left:669px;width:24px"></div><div class="bc" style="left:693px;width:25px"></div><div class="bc" style="left:718px;width:25px"></div><div class="bc r" style="left:743px;width:55px">1,112.63</div><div class="bc r" style="left:798px;width:55px">556.32</div><div class="bc r" style="left:853px;width:66px">1,112.63</div><div class="bc r" style="left:919px;width:54px">0.00</div><div class="bc" style="left:973px;width:25px"></div><div class="bc" style="left:998px;width:60px">XML</div><div class="bc" style="left:1058px;width:75px"></div></div>
<div class="row" style="top:315px"><div class="bc f" style="left:0px;width:75px">Orlando Int...</div><div class="bc" style="left:75px;width:120px">Rosen Shingle Creek</div><div class="bc" style="left:195px;width:40px">4.0</div><div class="bc" style="left:235px;width:75px">Bed &amp; Brea...</div><div class="bc" style="left:310px;width:90px">Double Run Of...</div><div class="bc" style="left:400px;width:35px">Sun</div><div class="bc" style="left:435px;width:68px">19/03/2017</div><div class="bc" style="left:503px;width:35px">Fri</div><div class="bc" style="left:538px;width:68px">24/03/2017</div><div class="bc" style="left:606px;width:63px">Get A Bed</div><div class="bc c" style="left:669px;width:24px"></div><div class="bc" style="left:693px;width:25px"></div><div class="bc" style="left:718px;width:25px"></div><div class="bc r" style="left:743px;width:55px">1,171.81</div><div class="bc r" style="left:798px;width:55px">585.91</div><div class="bc r" style="left:853px;width:66px">1,171.81</div><div class="bc r" style="left:919px;width:54px">0.00</div><div class="bc" style="left:973px;width:25px"></div><div class="bc" style="left:998px;width:60px">XML</div><div class="bc" style="left:1058px;width:75px"></div></div></div>
</div>

<div class="a" style="left:0;top:826px;width:1600px;height:1px;background:#d4d0c8"></div>
<div class="t" style="left:781px;top:832px">User: 369 - Andy Rahman</div>
<div class="t" style="left:916px;top:832px">Retailer: 'Ocean-Florida'</div>
<div class="t" style="left:1043px;top:832px">Client: none</div>
<div class="t" style="left:1535px;top:832px">14:03 GMT</div>
<div class="a" style="left:0;top:857px;width:1600px;height:1px;background:#fff"></div>
</body></html>
